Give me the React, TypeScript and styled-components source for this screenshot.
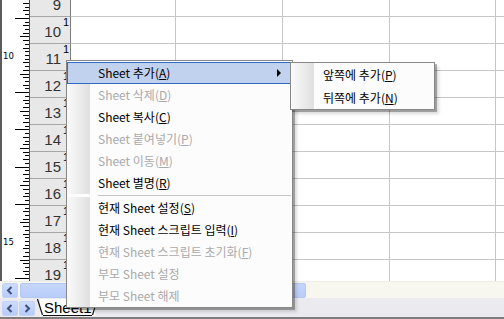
import * as React from "react";
import styled, { createGlobalStyle } from "styled-components";

const GlobalStyle = createGlobalStyle`
  html, body {
    margin: 0;
    padding: 0;
    background: #ffffff;
  }
  body {
    font-family: "Liberation Sans", "Noto Sans CJK KR", sans-serif;
  }
`;

const ROW_NUMBERS = [9, 10, 11, 12, 13, 14, 15, 16, 17, 18, 19];
const CELL_WIDTHS = [105, 107, 107, 106, 40];

interface MenuEntry {
  label: string;
  key?: string;
  disabled?: boolean;
  active?: boolean;
  submenu?: boolean;
  separator?: boolean;
}

const MENU: MenuEntry[] = [
  { label: "Sheet 추가", key: "A", active: true, submenu: true },
  { label: "Sheet 삭제", key: "D", disabled: true },
  { label: "Sheet 복사", key: "C" },
  { label: "Sheet 붙여넣기", key: "P", disabled: true },
  { label: "Sheet 이동", key: "M", disabled: true },
  { label: "Sheet 별명", key: "R" },
  { label: "", separator: true },
  { label: "현재 Sheet 설정", key: "S" },
  { label: "현재 Sheet 스크립트 입력", key: "I" },
  { label: "현재 Sheet 스크립트 초기화", key: "F", disabled: true },
  { label: "부모 Sheet 설정", disabled: true },
  { label: "부모 Sheet 해제", disabled: true },
];

const SUBMENU: MenuEntry[] = [
  { label: "앞쪽에 추가", key: "P" },
  { label: "뒤쪽에 추가", key: "N" },
];

// vertical ruler: one unit = 37.2px, ten ticks per unit, labels every 5 units
const Ruler = () => {
  const ticks: React.ReactNode[] = [];
  const step = 3.72;
  for (let k = -16; k < 62; k++) {
    const y = Math.round(55 + k * step) + 0.5;
    if (y < 0 || y > 282) continue;
    if (k % 50 === 0) {
      ticks.push(
        <text key={"t" + k} x={1} y={y + 3} fontSize={8.5} fill="#000" fontFamily="DejaVu Sans, sans-serif">
          {10 + k / 10}
        </text>
      );
      ticks.push(<line key={k} x1={23} x2={27} y1={y} y2={y} stroke="#000" />);
    } else if (k % 10 === 0) {
      ticks.push(<line key={k} x1={13} x2={27} y1={y} y2={y} stroke="#000" />);
    } else if (k % 5 === 0) {
      ticks.push(<line key={k} x1={18} x2={27} y1={y} y2={y} stroke="#000" />);
    } else {
      const len = k % 2 === 0 ? 6 : 4;
      ticks.push(<line key={k} x1={27 - len} x2={27} y1={y} y2={y} stroke="#000" />);
    }
  }
  return (
    <RulerBox>
      <svg width="27" height="281" viewBox="0 0 27 281">
        {ticks}
      </svg>
    </RulerBox>
  );
};

const Chevron = ({ dir }: { dir: "left" | "right" }) => (
  <svg width="8" height="9" viewBox="0 0 8 9">
    <path
      d={dir === "left" ? "M5.5 1 L2 4.5 L5.5 8" : "M2.5 1 L6 4.5 L2.5 8"}
      fill="none"
      stroke="#3b4f7d"
      strokeWidth="2"
    />
  </svg>
);

const Label = ({ text, k }: { text: string; k?: string }) => (
  <span>
    {text}
    {k && (
      <>
        (<u>{k}</u>)
      </>
    )}
  </span>
);

const App = () => {
  return (
    <>
      <GlobalStyle />
      <Frame>
        <SheetArea>
          <Ruler />
          <Rows>
            {ROW_NUMBERS.map((n) => (
              <Row key={n}>
                <RowHead>
                  <RowNum>{n}</RowNum>
                  <RowSup>1</RowSup>
                </RowHead>
                {CELL_WIDTHS.map((w, i) => (
                  <Cell key={i} w={w} />
                ))}
              </Row>
            ))}
          </Rows>
        </SheetArea>
        <ScrollRow>
          <ArrowButton>
            <Chevron dir="left" />
          </ArrowButton>
          <Thumb />
          <Track />
        </ScrollRow>
        <TabBar>
          <ArrowButton>
            <Chevron dir="left" />
          </ArrowButton>
          <ArrowButton>
            <Chevron dir="right" />
          </ArrowButton>
          <SheetTab>
            <svg width="6" height="17" viewBox="0 0 6 17">
              <path d="M0.5 0 L5.5 16" stroke="#111" strokeWidth="1.2" fill="none" />
            </svg>
            <TabText>Sheet1</TabText>
            <svg width="6" height="17" viewBox="0 0 6 17">
              <path d="M5.5 0 L0.5 16" stroke="#111" strokeWidth="1.2" fill="none" />
            </svg>
          </SheetTab>
        </TabBar>

        <Menu>
          {MENU.map((m, i) =>
            m.separator ? (
              <Separator key={i} />
            ) : (
              <Item key={i} active={m.active} disabled={m.disabled}>
                <Gutter active={m.active} />
                <ItemText>
                  <Label text={m.label} k={m.key} />
                </ItemText>
                {m.submenu && <SubArrow />}
              </Item>
            )
          )}
        </Menu>
        <SubMenu>
          {SUBMENU.map((m, i) => (
            <SubItem key={i}>
              <Gutter />
              <SubText>
                <Label text={m.label} k={m.key} />
              </SubText>
            </SubItem>
          ))}
        </SubMenu>
      </Frame>
    </>
  );
};

const Frame = styled.div`
  position: relative;
  width: 504px;
  height: 319px;
  overflow: hidden;
  display: flex;
  flex-direction: column;
  background: #ffffff;
`;

const SheetArea = styled.div`
  display: flex;
  height: 281px;
  overflow: hidden;
`;

const RulerBox = styled.div`
  width: 27px;
  height: 281px;
  flex: none;
  background: #ffffff;
  border-left: 2px solid #5c5c5c;
  border-right: 1px solid #4a4a4a;
`;

const Rows = styled.div`
  display: flex;
  flex-direction: column;
  margin-top: -10px;
  flex: 1;
`;

const Row = styled.div`
  display: flex;
  height: 27px;
  flex: none;
`;

const RowHead = styled.div`
  width: 41px;
  flex: none;
  display: flex;
  justify-content: flex-end;
  align-items: center;
  padding-right: 1px;
  box-sizing: border-box;
  background: #e8e8e8;
  border-right: 1px solid #7c7c7c;
  border-bottom: 1px solid #a6a6a6;
`;

const RowNum = styled.span`
  font-family: "Liberation Sans", sans-serif;
  font-size: 15px;
  color: #333333;
  margin-top: 3px;
`;

const RowSup = styled.span`
  align-self: flex-start;
  font-family: "Liberation Sans", sans-serif;
  font-size: 11px;
  line-height: 11px;
  color: #000000;
  margin: 0 0 0 2px;
  width: 6px;
`;

const Cell = styled.div<{ w: number }>`
  width: ${(p) => p.w}px;
  flex: none;
  box-sizing: border-box;
  border-right: 1px solid #c6c6c6;
  border-bottom: 1px solid #c6c6c6;
`;

const ScrollRow = styled.div`
  display: flex;
  align-items: center;
  height: 16px;
  padding-left: 2px;
  background: #f7f6ef;
  border-top: 1px solid #eeede6;
`;

const ArrowButton = styled.div`
  width: 16px;
  height: 15px;
  flex: none;
  box-sizing: border-box;
  display: flex;
  align-items: center;
  justify-content: center;
  border: 1px solid #c3d3f7;
  border-radius: 2px;
  background: linear-gradient(#cddcfd, #b8ccf7);
`;

const Thumb = styled.div`
  width: 286px;
  height: 15px;
  margin-left: 2px;
  box-sizing: border-box;
  border: 1px solid #b3c7f3;
  border-radius: 2px;
  background: linear-gradient(#c6d6fc, #b9cdf8);
`;

const Track = styled.div`
  flex: 1;
`;

const TabBar = styled.div`
  display: flex;
  align-items: flex-start;
  gap: 1px;
  height: 21px;
  padding: 3px 0 0 2px;
  box-sizing: border-box;
  background: #ebeaef;
  border-bottom: 2px solid #7d7d7d;
`;

const SheetTab = styled.div`
  display: flex;
  height: 17px;
  margin-left: 1px;
  margin-top: -2px;
  background: linear-gradient(#ffffff, #ffffff) no-repeat 3px 0 / calc(100% - 6px) 100%;
`;

const TabText = styled.span`
  font-family: "Liberation Sans", sans-serif;
  font-size: 15px;
  line-height: 17px;
  color: #000;
  padding: 0 0 0 1px;
  border-bottom: 1px solid #111;
  box-sizing: border-box;
`;

const Menu = styled.div`
  position: absolute;
  left: 66px;
  top: 60px;
  width: 224px;
  padding: 1px 1px 0 0;
  background: #fcfcfc;
  border: 1px solid #878787;
  box-shadow: 2px 2px 0 rgba(0, 0, 0, 0.28), 4px 4px 3px rgba(0, 0, 0, 0.14);
`;

const Item = styled.div<{ active?: boolean; disabled?: boolean }>`
  position: relative;
  display: flex;
  align-items: center;
  height: 22px;
  box-sizing: border-box;
  border: 1px solid ${(p) => (p.active ? "#316ac5" : "transparent")};
  background: ${(p) => (p.active ? "#c1d2ee" : "transparent")};
  color: ${(p) => (p.disabled ? "#aaaaaa" : "#000000")};
  font-family: "Noto Sans CJK KR", "Liberation Sans", sans-serif;
  font-size: 12px;
  line-height: 14px;
`;

const Gutter = styled.div<{ active?: boolean }>`
  align-self: stretch;
  width: 23px;
  flex: none;
  background: ${(p) =>
    p.active ? "transparent" : "linear-gradient(to right, #fafafa, #e0e0e0)"};
  margin: -1px 0 -1px -1px;
`;

const ItemText = styled.div`
  padding-left: 8px;
  white-space: nowrap;
`;

const SubArrow = styled.div`
  position: absolute;
  right: 9px;
  top: 6px;
  width: 0;
  height: 0;
  border-top: 4px solid transparent;
  border-bottom: 4px solid transparent;
  border-left: 4px solid #000;
`;

const Separator = styled.div`
  height: 3px;
  margin-left: 31px;
  box-sizing: border-box;
  border-top: 1px solid #c5c5c5;
  position: relative;
  top: 1px;
`;

const SubMenu = styled.div`
  position: absolute;
  left: 290px;
  top: 62px;
  width: 143px;
  background: #fcfcfc;
  border: 1px solid #878787;
  box-shadow: 2px 2px 0 rgba(0, 0, 0, 0.28), 4px 4px 3px rgba(0, 0, 0, 0.14);
`;

const SubItem = styled.div`
  display: flex;
  align-items: center;
  height: 23px;
  font-family: "Noto Sans CJK KR", "Liberation Sans", sans-serif;
  font-size: 12px;
  line-height: 14px;
  color: #000;
  border: 1px solid transparent;
  box-sizing: border-box;
`;

const SubText = styled.div`
  padding-left: 9px;
  white-space: nowrap;
`;

export default App;
